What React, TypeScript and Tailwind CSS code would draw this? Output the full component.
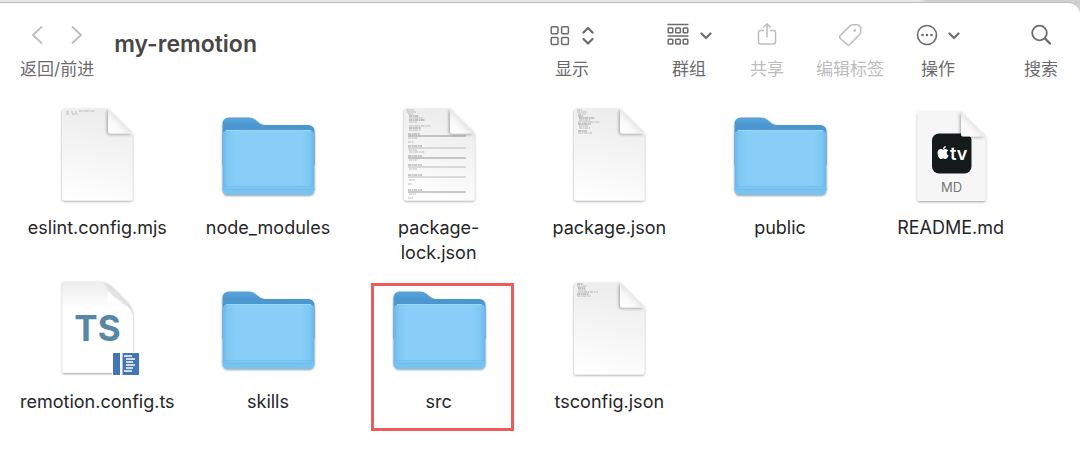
import type { ReactNode } from "react";
import { FaApple } from "react-icons/fa";

type TextLine = [x: number, y: number, width: number, strong?: boolean];

type ToolButtonProps = {
  label: string;
  disabled?: boolean;
  className?: string;
  children: ReactNode;
};

type FileEntry = {
  name: string;
  icon: ReactNode;
  marked?: boolean;
};

const eslintLines: TextLine[] = [
  [19, 7, 3],
  [24, 7, 2],
  [28, 7, 2],
  [19, 9, 4],
  [25, 9, 6],
  [32, 6, 16],
];

const packageLines: TextLine[] = [
  [18, 5, 5],
  [18, 7, 10],
  [19, 9, 8],
  [19, 11, 5, true],
  [20, 13, 16, true],
  [20, 15, 12],
  [19, 17, 22],
  [19, 19, 13, true],
  [20, 21, 9],
  [20, 23, 11],
  [19, 26, 9, true],
  [19, 28, 14],
];

const tsconfigLines: TextLine[] = [
  [18, 5, 6, true],
  [18, 7, 10],
  [19, 9, 7, true],
  [19, 11, 8],
  [19, 13, 20],
  [18, 15, 12, true],
  [18, 17, 14],
];

const lockLines: TextLine[] = [
  [17, 5, 8],
  [18, 7, 9],
  [19, 9, 5],
  [20, 11, 10, true],
  [20, 13, 14],
  [20, 15, 16, true],
  [20, 17, 8],
  [20, 21, 22],
  [20, 23, 12, true],
  [20, 25, 12],
  [19, 29, 12, true],
  [19, 31, 58, true],
  [19, 33, 9],
  [19, 37, 6],
  [19, 41, 14, true],
  [19, 43, 58],
  [20, 45, 8],
  [20, 47, 16],
  [19, 51, 14, true],
  [19, 53, 58, true],
  [20, 55, 8],
  [19, 60, 14, true],
  [19, 62, 58],
  [20, 64, 8],
  [19, 70, 14, true],
  [19, 72, 58],
  [20, 75, 6],
  [19, 79, 4],
  [19, 85, 14, true],
  [19, 87, 58, true],
  [20, 89, 7],
  [19, 93, 5],
];

const IconDefs = () => (
  <svg className="absolute size-0" aria-hidden="true">
    <defs>
      <linearGradient id="paper" x1="0.2" y1="0" x2="0" y2="1">
        <stop offset="0" stopColor="#ededed" />
        <stop offset="0.5" stopColor="#f6f6f6" />
        <stop offset="1" stopColor="#ffffff" />
      </linearGradient>
      <linearGradient id="fold" x1="0" y1="1" x2="0.55" y2="0.45">
        <stop offset="0" stopColor="#ffffff" />
        <stop offset="0.6" stopColor="#f9f9f9" />
        <stop offset="1" stopColor="#e2e2e2" />
      </linearGradient>
      <linearGradient id="folder-back" x1="0" y1="0" x2="0" y2="1">
        <stop offset="0" stopColor="#5aa5db" />
        <stop offset="0.15" stopColor="#4c97d0" />
        <stop offset="1" stopColor="#4690cb" />
      </linearGradient>
      <linearGradient id="folder-edge" x1="0" y1="0" x2="1" y2="0">
        <stop offset="0" stopColor="#6cb5e6" />
        <stop offset="0.06" stopColor="#80c8f5" />
        <stop offset="0.14" stopColor="#88cef8" />
        <stop offset="0.86" stopColor="#88cef8" />
        <stop offset="0.94" stopColor="#80c8f5" />
        <stop offset="1" stopColor="#6cb5e6" />
      </linearGradient>
      <linearGradient id="curl" x1="0.2" y1="0.8" x2="0.8" y2="0.2">
        <stop offset="0" stopColor="#ffffff" />
        <stop offset="1" stopColor="#cfcfcf" />
      </linearGradient>
      <linearGradient id="top-shade" x1="0" y1="0" x2="0" y2="1">
        <stop offset="0" stopColor="#ededed" />
        <stop offset="0.3" stopColor="#ffffff" />
      </linearGradient>
      <filter id="shadow" x="-10%" y="-10%" width="120%" height="120%">
        <feDropShadow dx="0" dy="1" stdDeviation="0.9" floodOpacity="0.38" />
      </filter>
      <filter id="soft" x="-30%" y="-30%" width="160%" height="160%">
        <feDropShadow dx="-1" dy="1" stdDeviation="1.6" floodOpacity="0.34" />
      </filter>
    </defs>
  </svg>
);

const FolderIcon = () => (
  <svg viewBox="0 0 100 100" className="size-25" aria-hidden="true">
    <g filter="url(#shadow)">
      <path
        d="M4.5 18.5a6 6 0 0 1 6-6h20c3 0 5 .8 7.200 2.600l3 2.500c2 1.600 3.600 2.400 6.300 2.400h43.500a6 6 0 0 1 6 6V60h-92z"
        fill="url(#folder-back)"
      />
      <rect x="4.500" y="25" width="92" height="65" rx="5.500" fill="url(#folder-edge)" />
    </g>
    <path d="M8 25.600h85" stroke="#9edafd" strokeWidth="1" />
    <path
      d="M4.500 82.500h92V84.500a5.500 5.500 0 0 1-5.500 5.500H10a5.500 5.500 0 0 1-5.500-5.500z"
      fill="#78c2f0"
    />
    <path d="M5 81.500h91" stroke="#72b8e8" strokeWidth="0.7" />
    <path d="M5 84.500h91" stroke="#6eb6e6" strokeWidth="0.5" />
  </svg>
);

const DocumentIcon = ({ lines }: { lines: TextLine[] }) => (
  <svg viewBox="0 0 100 100" className="size-25" aria-hidden="true">
    <path
      d="M17.500 3.500H61L85.500 28.500V93a2.500 2.500 0 0 1-2.500 2.500H17.500A2.500 2.500 0 0 1 15 93V6a2.500 2.500 0 0 1 2.500-2.500z"
      fill="url(#paper)"
      filter="url(#shadow)"
    />
    {lines.map(([x, y, width, strong]) => (
      <path
        key={`${x}-${y}`}
        d={`M${x} ${y}h${width}`}
        stroke={strong ? "#8c8c8c" : "#b4b4b4"}
        strokeWidth="0.9"
        strokeDasharray={width > 40 ? undefined : "3 0.6 2 0.4"}
      />
    ))}
    <path
      d="M61 3.500L85.500 28.500H63.500a2.500 2.500 0 0 1-2.500-2.500z"
      fill="url(#fold)"
      filter="url(#soft)"
    />
  </svg>
);

const MarkdownIcon = () => (
  <svg viewBox="0 0 100 100" className="size-25" aria-hidden="true">
    <path
      d="M18.500 6.500H60L84.500 31.500V94a2 2 0 0 1-2 2H18.500a2 2 0 0 1-2-2V8.500a2 2 0 0 1 2-2z"
      fill="#f6f6f6"
      filter="url(#shadow)"
    />
    <rect x="31" y="28.500" width="39.500" height="40" rx="7" fill="#151a1b" />
    <FaApple x={34.5} y={40} size={15} color="#ffffff" />
    <text
      x="49"
      y="54.500"
      fontSize="18"
      className="fill-white font-['Inter',sans-serif] font-semibold"
    >
      tv
    </text>
    <path
      d="M60 6.500L84.500 31.500H62a2 2 0 0 1-2-2z"
      fill="url(#fold)"
      filter="url(#soft)"
    />
    <text
      x="50.500"
      y="87"
      textAnchor="middle"
      fontSize="13"
      className="fill-[#777777] font-['Inter',sans-serif]"
    >
      MD
    </text>
  </svg>
);

const TypeScriptIcon = () => (
  <svg viewBox="0 0 100 100" className="size-25" aria-hidden="true">
    <path
      d="M15.500 2.500H50c10 0 14 4 19 9l10 10c5 5 7 9 7 17V94H15.500z"
      fill="url(#top-shade)"
      filter="url(#shadow)"
    />
    <path
      d="M52 2.500c7 .5 9 5 9 20 12-.5 21 2 25 14 0-7-2-10-7-15L69 11.500c-5-5-9-9-17-9z"
      fill="url(#curl)"
    />
    <path d="M60.500 11V23.500H76c-7-3-11-7-15.500-12.500z" fill="#ffffff" />
    <text
      x="50.500"
      y="62"
      textAnchor="middle"
      fontSize="35"
      className="fill-[#5687a5] font-['Inter',sans-serif] font-bold"
    >
      TS
    </text>
    <path d="M65 73h28v24H65z" fill="#ffffff" />
    <path d="M66 74h7v22h-7zM75.500 74H92v22H75.500z" fill="#4475b5" />
    <path
      d="M77 77h8M79 80h9M79 83h7M79 86h9M79 89h7M77 92h8"
      stroke="#ffffff"
      strokeWidth="1.400"
    />
  </svg>
);

const files: FileEntry[] = [
  { name: "eslint.config.mjs", icon: <DocumentIcon lines={eslintLines} /> },
  { name: "node_modules", icon: <FolderIcon /> },
  { name: "package-lock.json", icon: <DocumentIcon lines={lockLines} /> },
  { name: "package.json", icon: <DocumentIcon lines={packageLines} /> },
  { name: "public", icon: <FolderIcon /> },
  { name: "README.md", icon: <MarkdownIcon /> },
  { name: "remotion.config.ts", icon: <TypeScriptIcon /> },
  { name: "skills", icon: <FolderIcon /> },
  { name: "src", icon: <FolderIcon />, marked: true },
  { name: "tsconfig.json", icon: <DocumentIcon lines={tsconfigLines} /> },
];

const ChevronDown = () => (
  <svg
    viewBox="0 0 12 24"
    className="h-6 w-3 fill-none stroke-current stroke-[2.2]"
    strokeLinecap="round"
    strokeLinejoin="round"
  >
    <path d="M1.500 10.500L6 15 10.500 10.500" />
  </svg>
);

const ToolButton = ({ label, disabled, className = "", children }: ToolButtonProps) => (
  <button
    type="button"
    disabled={disabled}
    className={`flex flex-col items-center gap-2.5 text-[#6b6b6b] disabled:text-[#bdbdbd] ${className}`}
  >
    <span className="flex h-6 items-center">{children}</span>
    <span className="text-[17px] leading-6 whitespace-nowrap">{label}</span>
  </button>
);

const Toolbar = () => (
  <header className="flex items-start pt-5 pr-5.5 pl-5">
    <div className="flex flex-col items-center gap-2.5">
      <div className="flex h-6 items-center gap-6 text-[#bdbdbd]">
        <button type="button" aria-label="返回">
          <svg
            viewBox="0 0 16 24"
            className="h-6 w-4 fill-none stroke-current stroke-[1.8]"
            strokeLinecap="round"
            strokeLinejoin="round"
          >
            <path d="M12.500 4L4 12l8.500 8" />
          </svg>
        </button>
        <button type="button" aria-label="前进">
          <svg
            viewBox="0 0 16 24"
            className="h-6 w-4 fill-none stroke-current stroke-[1.8]"
            strokeLinecap="round"
            strokeLinejoin="round"
          >
            <path d="M3.500 4l8.500 8-8.500 8" />
          </svg>
        </button>
      </div>
      <span className="text-[17px] leading-6 whitespace-nowrap text-[#6b6b6b]">
        返回/前进
      </span>
    </div>

    <h1 className="mt-1 ml-5 text-[23px] leading-[34px] font-semibold text-[#474747]">
      my-remotion
    </h1>

    <div className="ml-auto flex items-start gap-8">
      <ToolButton label="显示" className="mr-10">
        <span className="flex items-center gap-3">
          <svg viewBox="0 0 20 24" className="h-6 w-5 fill-none stroke-current stroke-[1.5]">
            <rect x="1.200" y="3.700" width="6.800" height="7" rx="1.200" />
            <rect x="11.600" y="3.700" width="6.800" height="7" rx="1.200" />
            <rect x="1.200" y="14.500" width="6.800" height="7" rx="1.200" />
            <rect x="11.600" y="14.500" width="6.800" height="7" rx="1.200" />
          </svg>
          <svg
            viewBox="0 0 12 24"
            className="h-6 w-3 fill-none stroke-current stroke-[2.2]"
            strokeLinecap="round"
            strokeLinejoin="round"
          >
            <path d="M1.500 9.500L6 5l4.500 4.500M1.500 16L6 20.500l4.500-4.500" />
          </svg>
        </span>
      </ToolButton>
      <ToolButton label="群组" className="mr-1.5">
        <span className="flex items-center gap-2.5">
          <svg viewBox="0 0 22 24" className="size-6 fill-none stroke-current stroke-[1.5]">
            <path d="M0.500 1.500h21M0.500 13h21" />
            <rect x="1.200" y="5" width="4.600" height="4.800" rx="0.800" />
            <rect x="8.700" y="5" width="4.600" height="4.800" rx="0.800" />
            <rect x="16.200" y="5" width="4.600" height="4.800" rx="0.800" />
            <rect x="1.200" y="16.200" width="4.600" height="4.800" rx="0.800" />
            <rect x="8.700" y="16.200" width="4.600" height="4.800" rx="0.800" />
            <rect x="16.200" y="16.200" width="4.600" height="4.800" rx="0.800" />
          </svg>
          <ChevronDown />
        </span>
      </ToolButton>
      <ToolButton label="共享" disabled>
        <svg
          viewBox="0 0 20 24"
          className="h-6 w-5 fill-none stroke-current stroke-[1.5]"
          strokeLinecap="round"
          strokeLinejoin="round"
        >
          <path d="M6.500 7.500H3.500a2 2 0 0 0-2 2v9.500a2 2 0 0 0 2 2h13a2 2 0 0 0 2-2V9.500a2 2 0 0 0-2-2h-3M10 14V0.800M6.500 4L10 .8 13.500 4" />
        </svg>
      </ToolButton>
      <ToolButton label="编辑标签" disabled>
        <svg
          viewBox="0 0 24 24"
          className="size-6 fill-none stroke-current stroke-[1.5]"
          strokeLinejoin="round"
        >
          <path d="M14.500 1.800h5q1 0 1.600.7l1 1.200q.6.700.6 1.600v3.700q0 1.300-1 2.300l-9.700 9.900q-1.500 1.500-3 0l-6.700-5.700q-1.500-1.500 0-3L12 2.900q1-1 2.500-1.100z" />
          <circle cx="16.800" cy="7.400" r="1.300" fill="currentColor" stroke="none" />
        </svg>
      </ToolButton>
      <ToolButton label="操作" className="mr-8">
        <span className="flex items-center gap-2.5">
          <svg viewBox="0 0 22 24" className="h-6 w-5.5 fill-none stroke-current stroke-[1.600]">
            <circle cx="11" cy="12" r="9.500" />
            <path
              d="M6.500 12h.01M11 12h.01M15.500 12h.01"
              strokeWidth="2.600"
              strokeLinecap="round"
            />
          </svg>
          <ChevronDown />
        </span>
      </ToolButton>
      <ToolButton label="搜索">
        <svg
          viewBox="0 0 20 24"
          className="h-6 w-5 fill-none stroke-current stroke-[1.800]"
          strokeLinecap="round"
        >
          <circle cx="8.500" cy="10" r="7.300" />
          <path d="M14 15.500l5 5" strokeWidth="2.400" />
        </svg>
      </ToolButton>
    </div>
  </header>
);

const App = () => {
  return (
    <div className="flex min-h-screen flex-col bg-[#e6e6e6] bg-linear-to-r from-[#e9e9e9] from-85% to-[#d0d0d0] to-86% pt-0.5 font-['Inter','Noto_Sans_CJK_SC',sans-serif]">
      <IconDefs />
      <main className="flex-1 rounded-tr-xl border-t border-[#bdbdbd] bg-white">
        <Toolbar />
        <ul className="grid grid-cols-6 gap-y-3.5 pt-6 pr-11 pl-3">
          {files.map((file) => (
            <li key={file.name} className="relative flex min-h-40 flex-col items-center">
              {file.icon}
              <span className="mt-2.5 w-39 text-center text-[18px] leading-[25px] text-[#262626]">
                {file.name}
              </span>
              {file.marked && (
                <span className="absolute top-1 right-2.5 bottom-2 left-4.5 border-3 border-[#ee5b5b]" />
              )}
            </li>
          ))}
        </ul>
      </main>
    </div>
  );
};

export default App;
